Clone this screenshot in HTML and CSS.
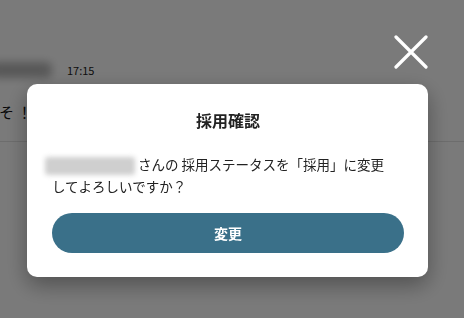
FILE: index.html
```html
<!DOCTYPE html>
<html lang="ja">
<head>
<meta charset="utf-8">
<link rel="stylesheet" href="styles.css">
</head>
<body>
<div class="page">
  <div class="head"></div>
  <div class="meta-row">
    <span class="name-blur"></span>
    <span class="time">17:15</span>
  </div>
  <div class="msg-row">
    <span class="msg">そ！</span>
  </div>
  <div class="rest"></div>
</div>

<div class="overlay">
  <button class="close" aria-label="閉じる">
    <svg width="34" height="34" viewBox="0 0 34 34">
      <path d="M2 2 L32 32 M32 2 L2 32" stroke="#fff" stroke-width="3.2" stroke-linecap="round" fill="none"/>
    </svg>
  </button>
  <div class="modal">
    <h2 class="title">採用確認</h2>
    <p class="body"><span class="blurred"></span> さんの 採用ステータスを「採用」に変更<br>してよろしいですか？</p>
    <button class="primary">変更</button>
  </div>
</div>
</body>
</html>
```
FILE: styles.css
```css
* { box-sizing: border-box; }
html, body { margin: 0; padding: 0; }
body {
  width: 464px;
  height: 318px;
  overflow: hidden;
  background: #ffffff;
  font-family: "Noto Sans CJK JP", "Noto Sans", sans-serif;
  color: #222;
}
.page { display: flex; flex-direction: column; }
.head { height: 58px; }
.meta-row {
  height: 24px;
  display: flex;
  align-items: center;
}
.name-blur {
  width: 62px;
  height: 16px;
  margin-left: -10px;
  background: #b8b8b8;
  border-radius: 6px;
  filter: blur(4px);
}
.time {
  margin-left: 15px;
  font-size: 11px;
  color: #222;
}
.msg-row {
  height: 60px;
  display: flex;
  align-items: center;
  border-bottom: 1px solid #e4e4e4;
}
.msg {
  margin-left: -1px;
  font-size: 15px;
  color: #111;
  letter-spacing: 3px;
}
.overlay {
  position: fixed;
  inset: 0;
  background: rgba(0, 0, 0, 0.52);
  padding: 84px 36px 0 27px;
}
.close {
  position: absolute;
  left: 394px;
  top: 35px;
  width: 34px;
  height: 34px;
  padding: 0;
  border: 0;
  background: none;
  display: block;
}
.close svg { display: block; }
.modal {
  width: 401px;
  background: #fff;
  border-radius: 10px;
  padding: 24px 24px 24px 25px;
  box-shadow: 0 8px 22px rgba(0, 0, 0, 0.35);
  display: flex;
  flex-direction: column;
}
.title {
  margin: 0;
  font-size: 16px;
  line-height: 24px;
  font-weight: 700;
  text-align: center;
  color: #222;
}
.body {
  margin: 21px 0 0;
  font-size: 13.5px;
  line-height: 22px;
  color: #222;
  white-space: nowrap;
}
.blurred {
  display: inline-block;
  width: 90px;
  height: 18px;
  margin-left: -7px;
  vertical-align: -5px;
  background: #cfcfcf;
  border-radius: 3px;
  filter: blur(2.5px);
}
.primary {
  margin-top: 16px;
  height: 40px;
  width: 352px;
  border: 0;
  border-radius: 20px;
  background: #3a7089;
  color: #fff;
  font-family: "Noto Sans CJK JP", "Noto Sans", sans-serif;
  font-size: 14px;
  font-weight: 700;
}
```
